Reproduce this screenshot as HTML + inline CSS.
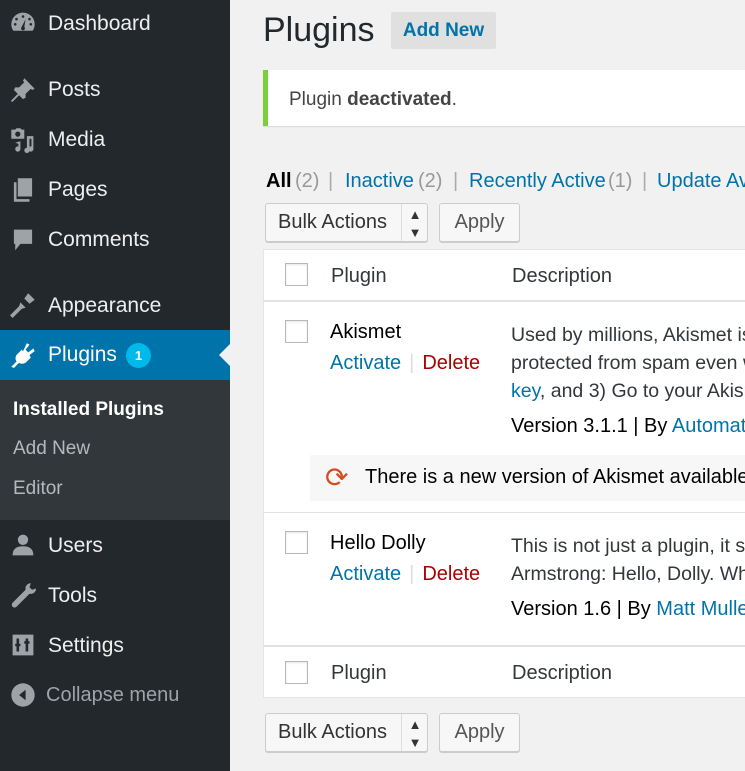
<!DOCTYPE html>
<html><head><meta charset="utf-8"><style>
*{margin:0;padding:0;box-sizing:border-box}
html,body{width:745px;height:771px;overflow:hidden}
body{background:#f1f1f1;font-family:"Liberation Sans",sans-serif;font-size:20px;color:#23282d;position:relative}
#wrap{position:absolute;left:0;top:0;width:745px;height:771px;overflow:hidden}
.a{position:absolute;white-space:nowrap}
#side{position:absolute;left:0;top:0;width:230px;height:771px;background:#23282d}
.mi{position:absolute;left:48px;color:#eee;font-size:21px}
.ic{position:absolute;left:10px;width:26px;height:26px;fill:#9ea3a8}
.sub{position:absolute;left:13px;font-size:19px;color:#b4b9be}
.l{color:#0073aa}
.cb{position:absolute;width:23px;height:23px;border:1px solid #b4b9be;background:#fff;box-shadow:inset 0 1px 2px rgba(0,0,0,.1)}
.btn{position:absolute;height:39px;border:1px solid #ccc;background:#f7f7f7;border-radius:3px;box-shadow:0 1px 0 #ccc;font-size:20px;color:#555;line-height:37px}
.g{color:#999}
.sep{color:#aaa}
.red{color:#a00}
</style></head><body><div id="wrap">
<div id="side">
<svg class="ic" style="top:10px" viewBox="0 0 20 20"><path d="M10 2a9 9 0 0 0-9 9c0 2 .6 3.6 1.6 5h14.8c1-1.4 1.6-3 1.6-5a9 9 0 0 0-9-9zm0 2a1 1 0 1 1 0 2 1 1 0 0 1 0-2zM5 6a1 1 0 1 1 0 2 1 1 0 0 1 0-2zm10 0a1 1 0 1 1 0 2 1 1 0 0 1 0-2zM3 11a1 1 0 1 1 2 0 1 1 0 0 1-2 0zm12 0a1 1 0 1 1 2 0 1 1 0 0 1-2 0zm-3-4l-1 6a1.5 1.5 0 1 1-2 0z"/></svg>
<div class="mi" style="top:12px">Dashboard</div>
<svg class="ic" style="top:77px" viewBox="0 0 20 20"><path d="M11 1l8 8-2 1-1-1-4 4 0 3-2 1-3-3-5 5-1 0 0-1 5-5-3-3 1-2 3 0 4-4-1-1z"/></svg>
<div class="mi" style="top:78px">Posts</div>
<svg class="ic" style="top:127px" viewBox="0 0 20 20"><path d="M1 2h3l1-1h3l1 1h2v7H1zm5 1.5a2 2 0 1 0 0 4 2 2 0 0 0 0-4zM13 7h5v10a2 2 0 1 1-1.5-2V9H15v9a2 2 0 1 1-2-2zM4 12l4-1v6a2 2 0 1 1-1.5-2V13z"/></svg>
<div class="mi" style="top:128px">Media</div>
<svg class="ic" style="top:177px" viewBox="0 0 20 20"><path d="M6 1h11v14H6zM3 4h2v13h10v2H3z"/></svg>
<div class="mi" style="top:178px">Pages</div>
<svg class="ic" style="top:227px" viewBox="0 0 20 20"><path d="M3 2h14v11h-9l-4 5v-5H3z"/></svg>
<div class="mi" style="top:228px">Comments</div>
<svg class="ic" style="top:292px" viewBox="0 0 20 20"><path d="M14 1l5 5-4 3-2-2-3 3 2 2-3 1-7 7-2-2 7-7 1-3 2 2 3-3-2-2z"/></svg>
<div class="mi" style="top:294px">Appearance</div>
<div style="position:absolute;left:0;top:330px;width:230px;height:50px;background:#0073aa"></div>
<div style="position:absolute;left:219px;top:344px;width:0;height:0;border:11px solid transparent;border-right-color:#f1f1f1;border-left:none"></div>
<svg class="ic" style="top:342px;fill:#fff" viewBox="0 0 20 20"><path d="M13 1l2 1-3 4 2 2 4-3 1 2-4 3 1 2-4 4c-2 1-4 1-5 0l-4 4-2-1 4-4c-1-2-1-3 0-5l4-4 1 1z"/></svg>
<div class="mi" style="top:343px;color:#fff">Plugins</div>
<div style="position:absolute;left:126px;top:343px;width:25px;height:25px;border-radius:50%;background:#00b9eb;color:#fff;font-size:13px;font-weight:bold;text-align:center;line-height:25px">1</div>
<div style="position:absolute;left:0;top:380px;width:230px;height:140px;background:#32373c"></div>
<div class="sub" style="top:399px;color:#fff;font-weight:bold">Installed Plugins</div>
<div class="sub" style="top:438px">Add New</div>
<div class="sub" style="top:478px">Editor</div>
<svg class="ic" style="top:532px" viewBox="0 0 20 20"><path d="M10 2a4 4 0 1 1 0 8 4 4 0 0 1 0-8zM2 18c0-5 3-7 8-7s8 2 8 7z"/></svg>
<div class="mi" style="top:534px">Users</div>
<svg class="ic" style="top:582px" viewBox="0 0 20 20"><path d="M16 1a4 4 0 0 0-4 5L2 16a2 2 0 0 0 3 3l10-10a4 4 0 0 0 5-4l-3 1-2-2 1-3z"/></svg>
<div class="mi" style="top:584px">Tools</div>
<svg class="ic" style="top:632px" viewBox="0 0 20 20"><path d="M2 2h16v16H2zm3 3v4H4v2h1v4h2v-4h1V9H7V5zm7 0v2h-1v2h1v6h2V9h1V7h-1V5z"/></svg>
<div class="mi" style="top:634px">Settings</div>
<svg class="ic" style="top:682px" viewBox="0 0 20 20"><path d="M10 1a9 9 0 1 1 0 18 9 9 0 0 1 0-18zm2 5l-5 4 5 4z"/></svg>
<div class="mi" style="top:684px;left:46px;color:#9ea3a8;font-size:20px">Collapse menu</div>
</div>

<div class="a" style="left:263px;top:11px;font-size:34px;color:#23282d">Plugins</div>
<div class="a" style="left:391px;top:12px;width:105px;height:37px;background:#e0e0e0;border-radius:2px;color:#0073aa;font-weight:bold;font-size:19px;text-align:center;line-height:37px">Add New</div>

<div style="position:absolute;left:263px;top:70px;width:482px;height:56px;background:#fff;border-left:5px solid #7ad03a;box-shadow:0 1px 1px rgba(0,0,0,.1)"></div>
<div class="a" style="left:289px;top:89px;font-size:19px;color:#444">Plugin <b>deactivated</b>.</div>

<b class="a" style="left:266px;top:170px;color:#000">All</b>
<span class="a g" style="left:295px;top:170px">(2)</span>
<span class="a sep" style="left:328px;top:170px">|</span>
<span class="a l" style="left:345px;top:170px">Inactive</span>
<span class="a g" style="left:418px;top:170px">(2)</span>
<span class="a sep" style="left:453px;top:170px">|</span>
<span class="a l" style="left:469px;top:170px">Recently Active</span>
<span class="a g" style="left:608px;top:170px">(1)</span>
<span class="a sep" style="left:642px;top:170px">|</span>
<span class="a l" style="left:657px;top:170px">Update Available</span>

<div class="btn" style="left:265px;top:203px;width:163px;color:#333;padding-left:12px">Bulk Actions<span style="position:absolute;left:135px;top:0;height:37px;border-left:1px solid #ddd;width:27px;text-align:center;font-size:13px;line-height:18px;padding-top:2px">▲<br>▼</span></div>
<div class="btn" style="left:439px;top:203px;width:81px;text-align:center">Apply</div>

<div style="position:absolute;left:263px;top:249px;width:482px;height:449px;background:#fff;border:1px solid #e5e5e5;border-right:none"></div>
<div style="position:absolute;left:263px;top:300px;width:482px;height:2px;background:#e1e1e1"></div>
<div style="position:absolute;left:263px;top:512px;width:482px;height:1px;background:#e1e1e1"></div>
<div style="position:absolute;left:263px;top:645px;width:482px;height:2px;background:#e1e1e1"></div>

<div class="cb" style="left:285px;top:263px"></div>
<div class="a" style="left:331px;top:265px;color:#32373c">Plugin</div>
<div class="a" style="left:512px;top:265px;color:#32373c">Description</div>

<div class="cb" style="left:285px;top:320px"></div>
<div class="a" style="left:330px;top:321px;color:#000">Akismet</div>
<div class="a" style="left:330px;top:352px"><span class="l">Activate</span><span style="color:#ddd;margin:0 8px">|</span><span class="red">Delete</span></div>
<div class="a" style="left:511px;top:321px;line-height:28px;font-size:19.5px;color:#32373c">Used by millions, Akismet is quite possibly<br>protected from spam even while you sleep.<br><span class="l">key</span>, and 3) Go to your Akismet configuration</div>
<div class="a" style="left:511px;top:415px;color:#000">Version 3.1.1 | By <span class="l">Automattic</span></div>
<div style="position:absolute;left:310px;top:455px;width:435px;height:46px;background:#f7f7f7"></div>
<div class="a" style="left:325px;top:461px;font-size:28px;color:#d54e21">⟳</div>
<div class="a" style="left:365px;top:466px;color:#000">There is a new version of Akismet available</div>

<div class="cb" style="left:285px;top:531px"></div>
<div class="a" style="left:330px;top:532px;color:#000">Hello Dolly</div>
<div class="a" style="left:330px;top:563px"><span class="l">Activate</span><span style="color:#ddd;margin:0 8px">|</span><span class="red">Delete</span></div>
<div class="a" style="left:511px;top:532px;line-height:28px;font-size:19.5px;color:#32373c">This is not just a plugin, it symbolizes<br>Armstrong: Hello, Dolly. When activated</div>
<div class="a" style="left:511px;top:598px;color:#000">Version 1.6 | By <span class="l">Matt Mullenweg</span></div>

<div class="cb" style="left:285px;top:661px"></div>
<div class="a" style="left:331px;top:662px;color:#32373c">Plugin</div>
<div class="a" style="left:512px;top:662px;color:#32373c">Description</div>

<div class="btn" style="left:265px;top:713px;width:163px;color:#333;padding-left:12px">Bulk Actions<span style="position:absolute;left:135px;top:0;height:37px;border-left:1px solid #ddd;width:27px;text-align:center;font-size:13px;line-height:18px;padding-top:2px">▲<br>▼</span></div>
<div class="btn" style="left:439px;top:713px;width:81px;text-align:center">Apply</div>
</div></body></html>
